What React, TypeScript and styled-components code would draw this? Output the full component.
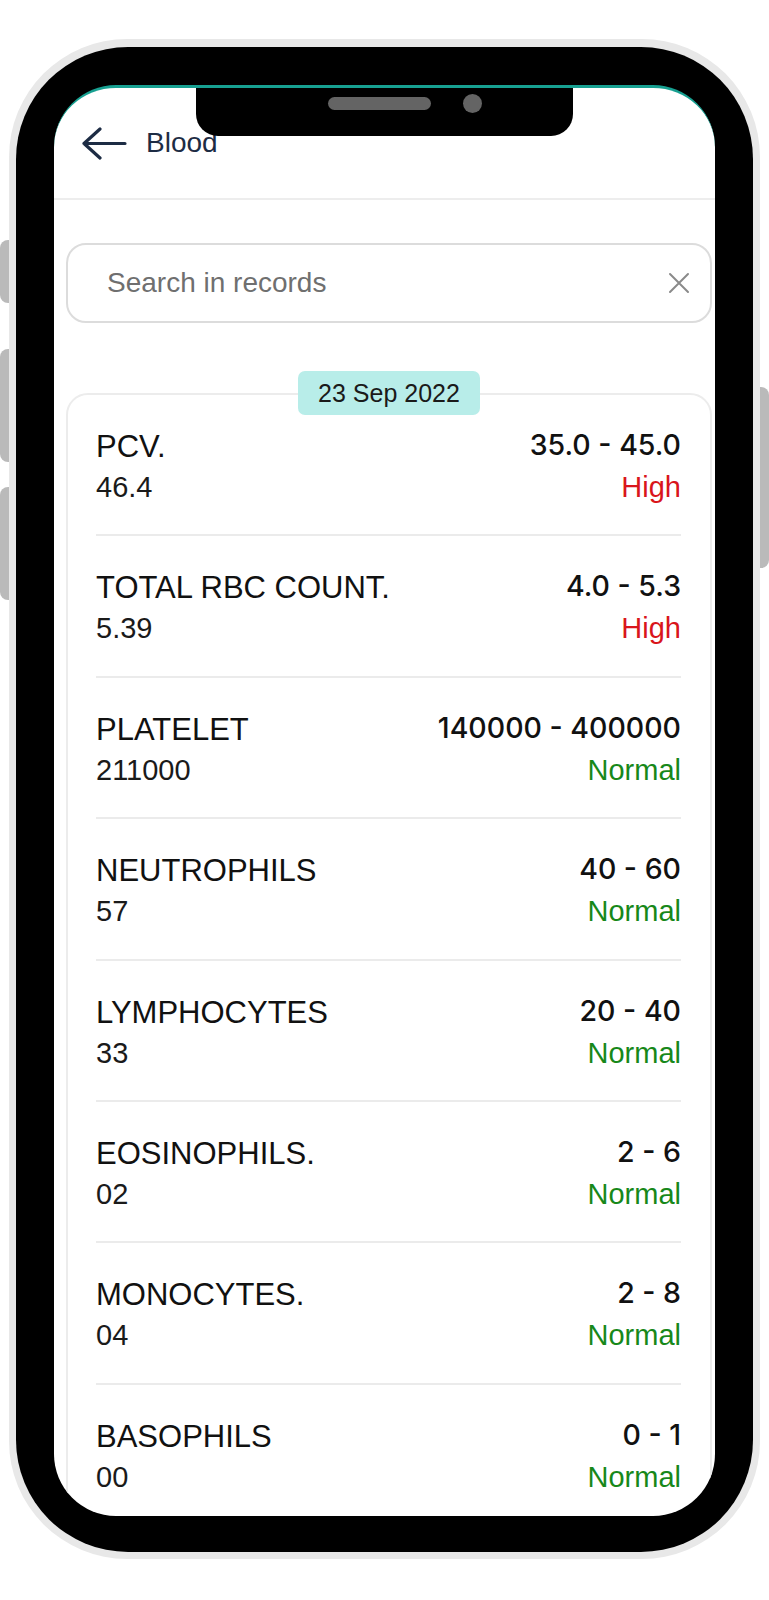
import React from 'react';
import styled, { createGlobalStyle } from 'styled-components';

const GlobalStyle = createGlobalStyle`
  * {
    box-sizing: border-box;
  }

  body {
    margin: 0;
    background: #ffffff;
    font-family: 'Liberation Sans', Arial, sans-serif;
  }
`;

const Page = styled.div`
  padding: 39px 9px 41px;
`;

const Bezel = styled.div`
  position: relative;
  background: #e8e8e8;
  border-radius: 118px;
  padding: 8px 7px 7px;
`;

const SideButton = styled.div<{ $side: 'left' | 'right'; $top: number; $height: number }>`
  position: absolute;
  top: ${(p) => p.$top}px;
  height: ${(p) => p.$height}px;
  width: 9px;
  background: #bababa;
  ${(p) =>
    p.$side === 'left'
      ? 'left: -9px; border-radius: 8px 0 0 8px;'
      : 'right: -9px; border-radius: 0 8px 8px 0;'}
`;

const Body = styled.div`
  background: #000000;
  border-radius: 112px;
  padding: 38px 38px 36px;
`;

const Screen = styled.div`
  position: relative;
  height: 1431px;
  background: #ffffff;
  border-top: 3px solid #17a091;
  border-radius: 62px;
  overflow: hidden;
`;

const Notch = styled.div`
  position: absolute;
  top: -3px;
  left: 142px;
  width: 377px;
  height: 51px;
  background: #000000;
  border-radius: 0 0 22px 22px;
  display: flex;
  align-items: center;
  justify-content: center;
  gap: 32px;
  padding: 0 0 14px 41px;
  z-index: 2;
`;

const Speaker = styled.div`
  width: 103px;
  height: 13px;
  border-radius: 7px;
  background: #646464;
`;

const Camera = styled.div`
  width: 19px;
  height: 19px;
  border-radius: 50%;
  background: #646464;
`;

const Header = styled.header`
  height: 112px;
  display: flex;
  align-items: center;
  gap: 19px;
  padding: 0 0 0 27px;
  border-bottom: 2px solid #ededed;
`;

const Title = styled.span`
  font-size: 28px;
  color: #1d2c44;
`;

const Content = styled.div`
  padding: 43px 3px 0 12px;
`;

const SearchBox = styled.div`
  height: 80px;
  display: flex;
  align-items: center;
  justify-content: space-between;
  padding: 0 20px 0 39px;
  border: 2px solid #dcdcdc;
  border-radius: 20px;
`;

const Placeholder = styled.span`
  font-size: 28px;
  color: #6f6f6f;
`;

const Section = styled.section`
  margin-top: 48px;
`;

const DateRow = styled.div`
  position: relative;
  z-index: 1;
  display: flex;
  justify-content: center;
  margin-bottom: -22px;
`;

const DatePill = styled.div`
  width: 182px;
  height: 44px;
  display: flex;
  align-items: center;
  justify-content: center;
  background: #b8ede9;
  border-radius: 7px;
  font-size: 25px;
  color: #1a1a1a;
`;

const Card = styled.div`
  border: 2px solid #ececec;
  border-radius: 22px;
  padding: 0 29px 0 28px;
`;

const Row = styled.div`
  display: flex;
  justify-content: space-between;
  padding: 32px 0 27.4px;
  border-bottom: 2px solid #ebebeb;
`;

const Col = styled.div<{ $right?: boolean }>`
  display: flex;
  flex-direction: column;
  align-items: ${(p) => (p.$right ? 'flex-end' : 'flex-start')};
`;

const Label = styled.div`
  font-size: 31px;
  line-height: 40px;
  color: #111111;
`;

const Value = styled.div`
  font-size: 29px;
  line-height: 40px;
  color: #1a1a1a;
`;

const Range = styled.div`
  font-family: Inter, 'Liberation Sans', sans-serif;
  font-weight: 500;
  font-size: 28.5px;
  line-height: 36px;
  color: #111111;
`;

const Status = styled.div<{ $high: boolean }>`
  margin-top: 4px;
  font-size: 29px;
  line-height: 40px;
  color: ${(p) => (p.$high ? '#d9151b' : '#17881a')};
`;

type Result = { name: string; value: string; range: string; status: 'High' | 'Normal' };

const results: Result[] = [
  { name: 'PCV.', value: '46.4', range: '35.0 - 45.0', status: 'High' },
  { name: 'TOTAL RBC COUNT.', value: '5.39', range: '4.0 - 5.3', status: 'High' },
  { name: 'PLATELET', value: '211000', range: '140000 - 400000', status: 'Normal' },
  { name: 'NEUTROPHILS', value: '57', range: '40 - 60', status: 'Normal' },
  { name: 'LYMPHOCYTES', value: '33', range: '20 - 40', status: 'Normal' },
  { name: 'EOSINOPHILS.', value: '02', range: '2 - 6', status: 'Normal' },
  { name: 'MONOCYTES.', value: '04', range: '2 - 8', status: 'Normal' },
  { name: 'BASOPHILS', value: '00', range: '0 - 1', status: 'Normal' },
];

const BackArrow = () => (
  <svg width="46" height="33" viewBox="0 0 46 33" fill="none">
    <path
      d="M3 16.5H44M19 2L3 16.5L19 31"
      stroke="#1d2c44"
      strokeWidth="3.2"
      strokeLinecap="round"
      strokeLinejoin="round"
    />
  </svg>
);

const CloseIcon = () => (
  <svg width="22" height="22" viewBox="0 0 22 22" fill="none">
    <path d="M2 2L20 20M20 2L2 20" stroke="#8a8a8a" strokeWidth="2" strokeLinecap="round" />
  </svg>
);

const App: React.FC = () => {
  return (
    <>
      <GlobalStyle />
      <Page>
        <Bezel>
          <SideButton $side="left" $top={201} $height={63} />
          <SideButton $side="left" $top={310} $height={113} />
          <SideButton $side="left" $top={448} $height={113} />
          <SideButton $side="right" $top={348} $height={181} />
          <Body>
            <Screen>
              <Notch>
                <Speaker />
                <Camera />
              </Notch>
              <Header>
                <BackArrow />
                <Title>Blood</Title>
              </Header>
              <Content>
                <SearchBox>
                  <Placeholder>Search in records</Placeholder>
                  <CloseIcon />
                </SearchBox>
                <Section>
                  <DateRow>
                    <DatePill>23 Sep 2022</DatePill>
                  </DateRow>
                  <Card>
                    {results.map((r) => (
                      <Row key={r.name}>
                        <Col>
                          <Label>{r.name}</Label>
                          <Value>{r.value}</Value>
                        </Col>
                        <Col $right>
                          <Range>{r.range}</Range>
                          <Status $high={r.status === 'High'}>{r.status}</Status>
                        </Col>
                      </Row>
                    ))}
                  </Card>
                </Section>
              </Content>
            </Screen>
          </Body>
        </Bezel>
      </Page>
    </>
  );
};

export default App;
